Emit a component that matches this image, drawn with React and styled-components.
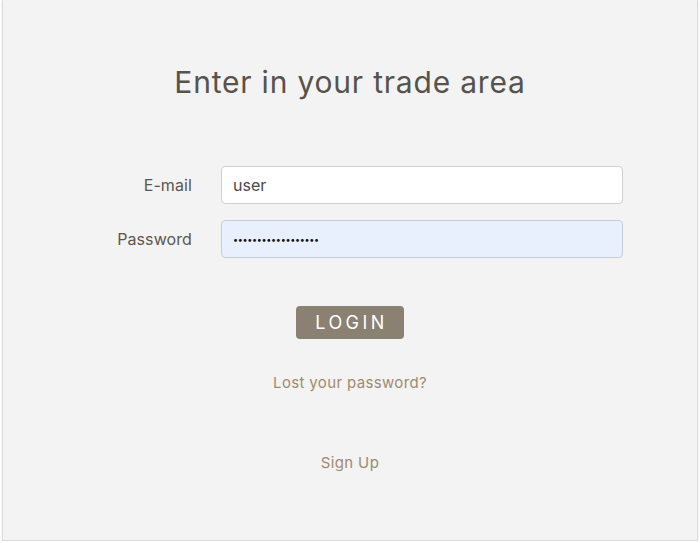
import React from "react";
import styled, { createGlobalStyle } from "styled-components";

const Global = createGlobalStyle`
  html, body { margin: 0; padding: 0; background: #ffffff; }
  body { font-family: Inter, "Open Sans", "Liberation Sans", sans-serif; }
  * { box-sizing: border-box; }
`;

const Panel = styled.div`
  margin: 0 2px;
  height: 541px;
  background: #f3f3f3;
  border: 1px solid #dcdcdc;
  border-top: none;
  box-shadow: 0 1px 2px rgba(0, 0, 0, 0.12);
  display: flex;
  flex-direction: column;
  align-items: stretch;
`;

const Title = styled.h1`
  margin: 62px 0 0;
  font-size: 30px;
  font-weight: 400;
  line-height: 40px;
  color: #57524b;
  text-align: center;
  letter-spacing: 0.8px;
`;

const Form = styled.form`
  margin-top: 64px;
  display: grid;
  grid-template-columns: 189px 402px;
  column-gap: 29px;
  row-gap: 16px;
  align-items: center;
`;

const Label = styled.label`
  text-align: right;
  font-size: 16px;
  color: #5b5650;
  letter-spacing: 0.1px;
`;

const Input = styled.input`
  height: 38px;
  width: 100%;
  border: 1px solid ${(p) => (p.$filled ? "#c7cdd8" : "#cfcfcf")};
  border-radius: 4px;
  background: ${(p) => (p.$filled ? "#e8f0fe" : "#ffffff")};
  padding: 0 11px;
  font-family: inherit;
  font-size: ${(p) => (p.$filled ? "9px" : "16px")};
  letter-spacing: ${(p) => (p.$filled ? "-0.3px" : "0")};
  color: ${(p) => (p.$filled ? "#111111" : "#4a4a4a")};
  outline: none;
`;

const Actions = styled.div`
  display: flex;
  flex-direction: column;
  align-items: center;
`;

const Button = styled.button`
  margin-top: 48px;
  width: 108px;
  height: 33px;
  border: none;
  border-radius: 4px;
  background: #8a8172;
  color: #ffffff;
  font-family: inherit;
  font-size: 18px;
  letter-spacing: 3.4px;
  padding: 0 0 0 3px;
  cursor: pointer;
`;

const Link = styled.a`
  margin-top: ${(p) => p.$top}px;
  font-size: 15px;
  color: #9e8b6f;
  text-decoration: none;
  line-height: 20px;
  letter-spacing: 0.35px;
`;

export default function App() {
  return (
    <>
      <Global />
      <Panel>
        <Title>Enter in your trade area</Title>
        <Form onSubmit={(e) => e.preventDefault()}>
          <Label htmlFor="email">E-mail</Label>
          <Input id="email" type="text" defaultValue="user" />
          <Label htmlFor="pwd">Password</Label>
          <Input id="pwd" type="password" defaultValue="123456789012345678" $filled />
        </Form>
        <Actions>
          <Button type="button">LOGIN</Button>
          <Link href="#" $top={34}>Lost your password?</Link>
          <Link href="#" $top={60}>Sign Up</Link>
        </Actions>
      </Panel>
    </>
  );
}
